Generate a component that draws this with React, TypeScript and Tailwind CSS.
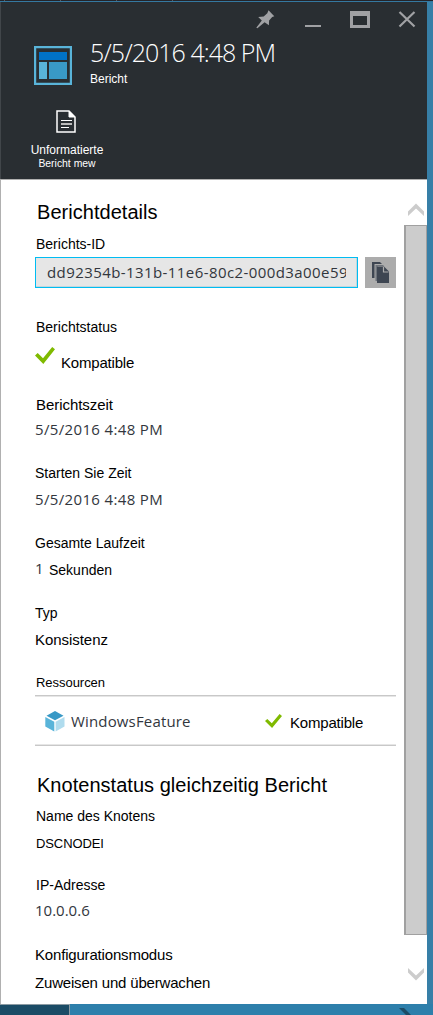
import type { ReactNode } from "react";

const cx = (...c: string[]) => c.join(" ");

function Line({ className = "", children }: { className?: string; children: ReactNode }) {
  return <div className={cx("h-5 whitespace-nowrap leading-5", className)}>{children}</div>;
}

const segoe = "font-['Open_Sans','Noto_Sans',sans-serif] text-[#32363d]";

function Check({ className }: { className: string }) {
  return (
    <svg viewBox="0 0 20 17" className={className} preserveAspectRatio="none">
      <path d="M0 8.6 L2.7 6 L8 11.3 L17.2 0 L20 2.3 L8.3 17 Z" fill="#7fba00" />
    </svg>
  );
}

function WindowButtons() {
  return (
    <svg width="165" height="20" viewBox="0 0 165 20" className="ml-[255px] block">
      <g fill="#a0a1a4">
        <path d="M13.5 0.3 L19.3 6.2 L17.2 6.9 L14.1 10.5 L13.9 15.2 L9.6 12.3 L2.4 18.2 L1.3 17.8 L6.8 10.4 L3.2 7.1 L8.7 6.5 L12.3 3.2 Z" />
        <path d="M50 15 h16 v2 h-16 Z" />
        <path fillRule="evenodd" d="M95 1 h20 v17 h-20 Z M98 6 v9 h14 v-9 Z" />
      </g>
      <path d="M144.5 2 L159.5 16.5 M159.5 2 L144.5 16.5" stroke="#a0a1a4" strokeWidth="2.2" fill="none" />
    </svg>
  );
}

function Header() {
  return (
    <header className="h-[177px] border-l border-[#41464a] bg-[#292e32] pt-2 text-white">
      <div className="-ml-px">
        <WindowButtons />
        <div className="mt-2.5 flex h-[52px]">
          <svg width="38" height="39" viewBox="0 0 38 39" className="ml-[34px] mt-1.5">
            <path d="M1 1 h36 v37 h-36 Z" fill="none" stroke="#59b4d9" strokeWidth="2.4" />
            <path d="M5 6 h28 v8 h-28 Z" fill="#0072c6" />
            <path d="M5 16 h8 v17 h-8 Z" fill="#59b4d9" />
            <path d="M15 16 h18 v17 h-18 Z" fill="#3999c6" />
          </svg>
          <div className="-mt-[3px] ml-[18px] whitespace-nowrap">
            <div className="h-[30px] font-['Open_Sans','Noto_Sans',sans-serif] text-[25px] font-light leading-[30px] tracking-[-0.97px]">
              5/5/2016 4:48 PM
            </div>
            <div className="mt-1 text-[12px] leading-4">Bericht</div>
          </div>
        </div>
        <div className="ml-[17px] mt-[18px] flex w-[100px] flex-col items-center whitespace-nowrap">
          <svg width="20" height="23" viewBox="0 0 20 23" className="-ml-0.5">
            <path d="M1 1 H13 L19 7 V22 H1 Z" fill="none" stroke="#fff" strokeWidth="1.5" />
            <path d="M13 1 V7 H19 Z" fill="#fff" stroke="#fff" />
            <path d="M5 10.5 H16 M5 17.5 H13" stroke="#fff" strokeWidth="1.2" />
            <path d="M5 14 H16" stroke="#bbb" strokeWidth="2" />
          </svg>
          <div className="mt-[9px] text-[12px] leading-4">Unformatierte</div>
          <div className="text-[10.4px] leading-3">Bericht mew</div>
        </div>
      </div>
    </header>
  );
}

function Details() {
  return (
    <main className="w-[403px] pl-[34px] text-[14px] text-black">
      <h2 className="ml-0.5 mt-5 h-6 whitespace-nowrap text-[20px] leading-6 tracking-[0.04px]">Berichtdetails</h2>
      <Line className="mt-2.5 pl-px">Berichts-ID</Line>
      <div className="mt-[3px] flex gap-[7px]">
        <div className="h-[31px] w-[323px] border border-[#00bcf2] bg-[#e6e6e6] px-[11px] shadow-[inset_-1px_-1px_0_0_#c3d6dc]">
          <div className={cx("overflow-hidden whitespace-nowrap text-[15px] leading-[29px] tracking-[0.42px]", segoe)}>
            dd92354b-131b-11e6-80c2-000d3a00e59
          </div>
        </div>
        <button
          className="flex h-[31px] w-[31px] items-center justify-center bg-[#acacac]"
          aria-label="Kopieren"
        >
          <svg width="17" height="21" viewBox="0 0 17 21" className="block">
            <path d="M0 0 H8 L10 2 H2.5 V16 H0 Z" fill="#3e4652" />
            <path d="M3.5 3 H11 L12 4 H5.5 V19 H3.5 Z" fill="#6d737b" />
            <path d="M5 4.5 H12 L17 9.5 V21 H5 Z" fill="#3e4652" />
            <path d="M11.5 5 V10 H16.5" fill="none" stroke="#acacac" strokeWidth="1.2" />
          </svg>
        </button>
      </div>

      <Line className="mt-[29px] pl-px">Berichtstatus</Line>
      <div className="mt-1.5 flex h-[30px]">
        <Check className="mt-1 h-[17px] w-5" />
        <Line className="ml-1.5 mt-2.5 text-[15px] tracking-[-0.2px]">Kompatible</Line>
      </div>

      <Line className="mt-[22px] pl-px text-[15px] tracking-[-0.05px]">Berichtszeit</Line>
      <Line className={cx("mt-1 text-[15px] tracking-[0.35px]", segoe)}>5/5/2016 4:48 PM</Line>

      <Line className="mt-6">Starten Sie Zeit</Line>
      <Line className={cx("mt-1.5 text-[15px] tracking-[0.35px]", segoe)}>5/5/2016 4:48 PM</Line>

      <Line className="mt-6">Gesamte Laufzeit</Line>
      <div className="mt-[7px] flex h-5">
        <Line className={cx("-mt-0.5 w-3.5 text-[15px]", segoe)}>1</Line>
        <Line>Sekunden</Line>
      </div>

      <Line className="mt-[23px]">Typ</Line>
      <Line className="mt-[7px] text-[15px] tracking-[-0.05px]">Konsistenz</Line>

      <Line className="mt-[23px] pl-px text-[13px] tracking-[-0.04px]">Ressourcen</Line>
      <div className="mt-0.5 flex h-[51px] w-[361px] border-b border-t border-[#c8c8c8] shadow-[inset_0_1px_#e6e6e6,inset_0_-1px_#e6e6e6]">
        <svg width="20" height="21" viewBox="0 0 20 21" className="ml-2.5 mt-[15px]">
          <path d="M10 0 L18.5 4.7 L10 9.3 L1.5 4.7 Z" fill="#3999c6" />
          <path d="M0.3 6 L9.3 10.7 V20.6 L0.3 15.6 Z" fill="#59b4d9" />
          <path d="M19.5 6 L10.6 10.7 V20.6 L19.5 15.6 Z" fill="#b0dcee" />
        </svg>
        <Line className={cx("ml-[5px] mt-[15px] w-[195px] pl-px text-[15px] tracking-[0.16px]", segoe)}>
          WindowsFeature
        </Line>
        <Check className="mt-[18px] h-3.5 w-[17px]" />
        <Line className="ml-2 mt-[17px] text-[15px] tracking-[-0.2px]">Kompatible</Line>
      </div>

      <h2 className="ml-0.5 mt-[27px] h-6 whitespace-nowrap text-[20px] leading-6 tracking-[0.03px]">
        Knotenstatus gleichzeitig Bericht
      </h2>
      <Line className="mt-[9px] pl-px">Name des Knotens</Line>
      <Line className="mt-2 pl-px text-[13px] tracking-[-0.1px]">DSCNODEI</Line>

      <Line className="mt-[21px] pl-px">IP-Adresse</Line>
      <Line className={cx("mt-[5px] text-[15px]", segoe)}>10.0.0.6</Line>

      <Line className="mt-[25px] text-[15px] tracking-[-0.18px]">Konfigurationsmodus</Line>
      <Line className="mt-2 text-[15px] tracking-[-0.18px]">Zuweisen und überwachen</Line>
    </main>
  );
}

function Scrollbar() {
  return (
    <aside className="flex w-[23px] flex-col">
      <svg width="16" height="13" viewBox="0 0 16 13" className="ml-1 mt-[23px]">
        <path d="M0 8.5 L8 0.5 L16 8.5 V13 L8 5.5 L0 13 Z" fill="#cccccc" />
      </svg>
      <div className="mt-[9px] h-[710px] border-b border-l-2 border-r border-t border-[#a0a0a0] bg-[#cccccc]" />
      <svg width="16" height="13" viewBox="0 0 16 13" className="ml-1 mt-[33px]">
        <path d="M0 4.5 L8 12.5 L16 4.5 V0 L8 7.5 L0 0 Z" fill="#cccccc" />
      </svg>
    </aside>
  );
}

export default function App() {
  return (
    <div className="flex h-[1015px] w-[433px] flex-col overflow-hidden bg-[#377fa7] font-['Liberation_Sans',Arial,sans-serif]">
      <div className="flex h-px gap-[55px] bg-[#242429] pl-1">
        <span className="w-px bg-[#5a5a5e]" />
        <span className="w-px bg-[#5a5a5e]" />
        <span className="w-px bg-[#5a5a5e]" />
        <span className="w-px bg-[#5a5a5e]" />
      </div>
      <div className="h-px bg-[#3478a0]" />
      <div className="w-[427px]">
        <Header />
        <div className="flex h-[825px] border-l border-t border-[#b0b0b0] bg-white">
          <Details />
          <Scrollbar />
        </div>
      </div>
      <footer className="flex h-[11px] bg-[#2d7fab]">
        <div className="w-[70px] border-r border-t border-[#8c9ba3] bg-[#1b4c66]" />
        <svg width="14" height="11" viewBox="0 0 14 11" className="ml-[329px]">
          <path d="M0 4 H5 L12 11 H7 Z" fill="#1b4c66" />
        </svg>
      </footer>
    </div>
  );
}
